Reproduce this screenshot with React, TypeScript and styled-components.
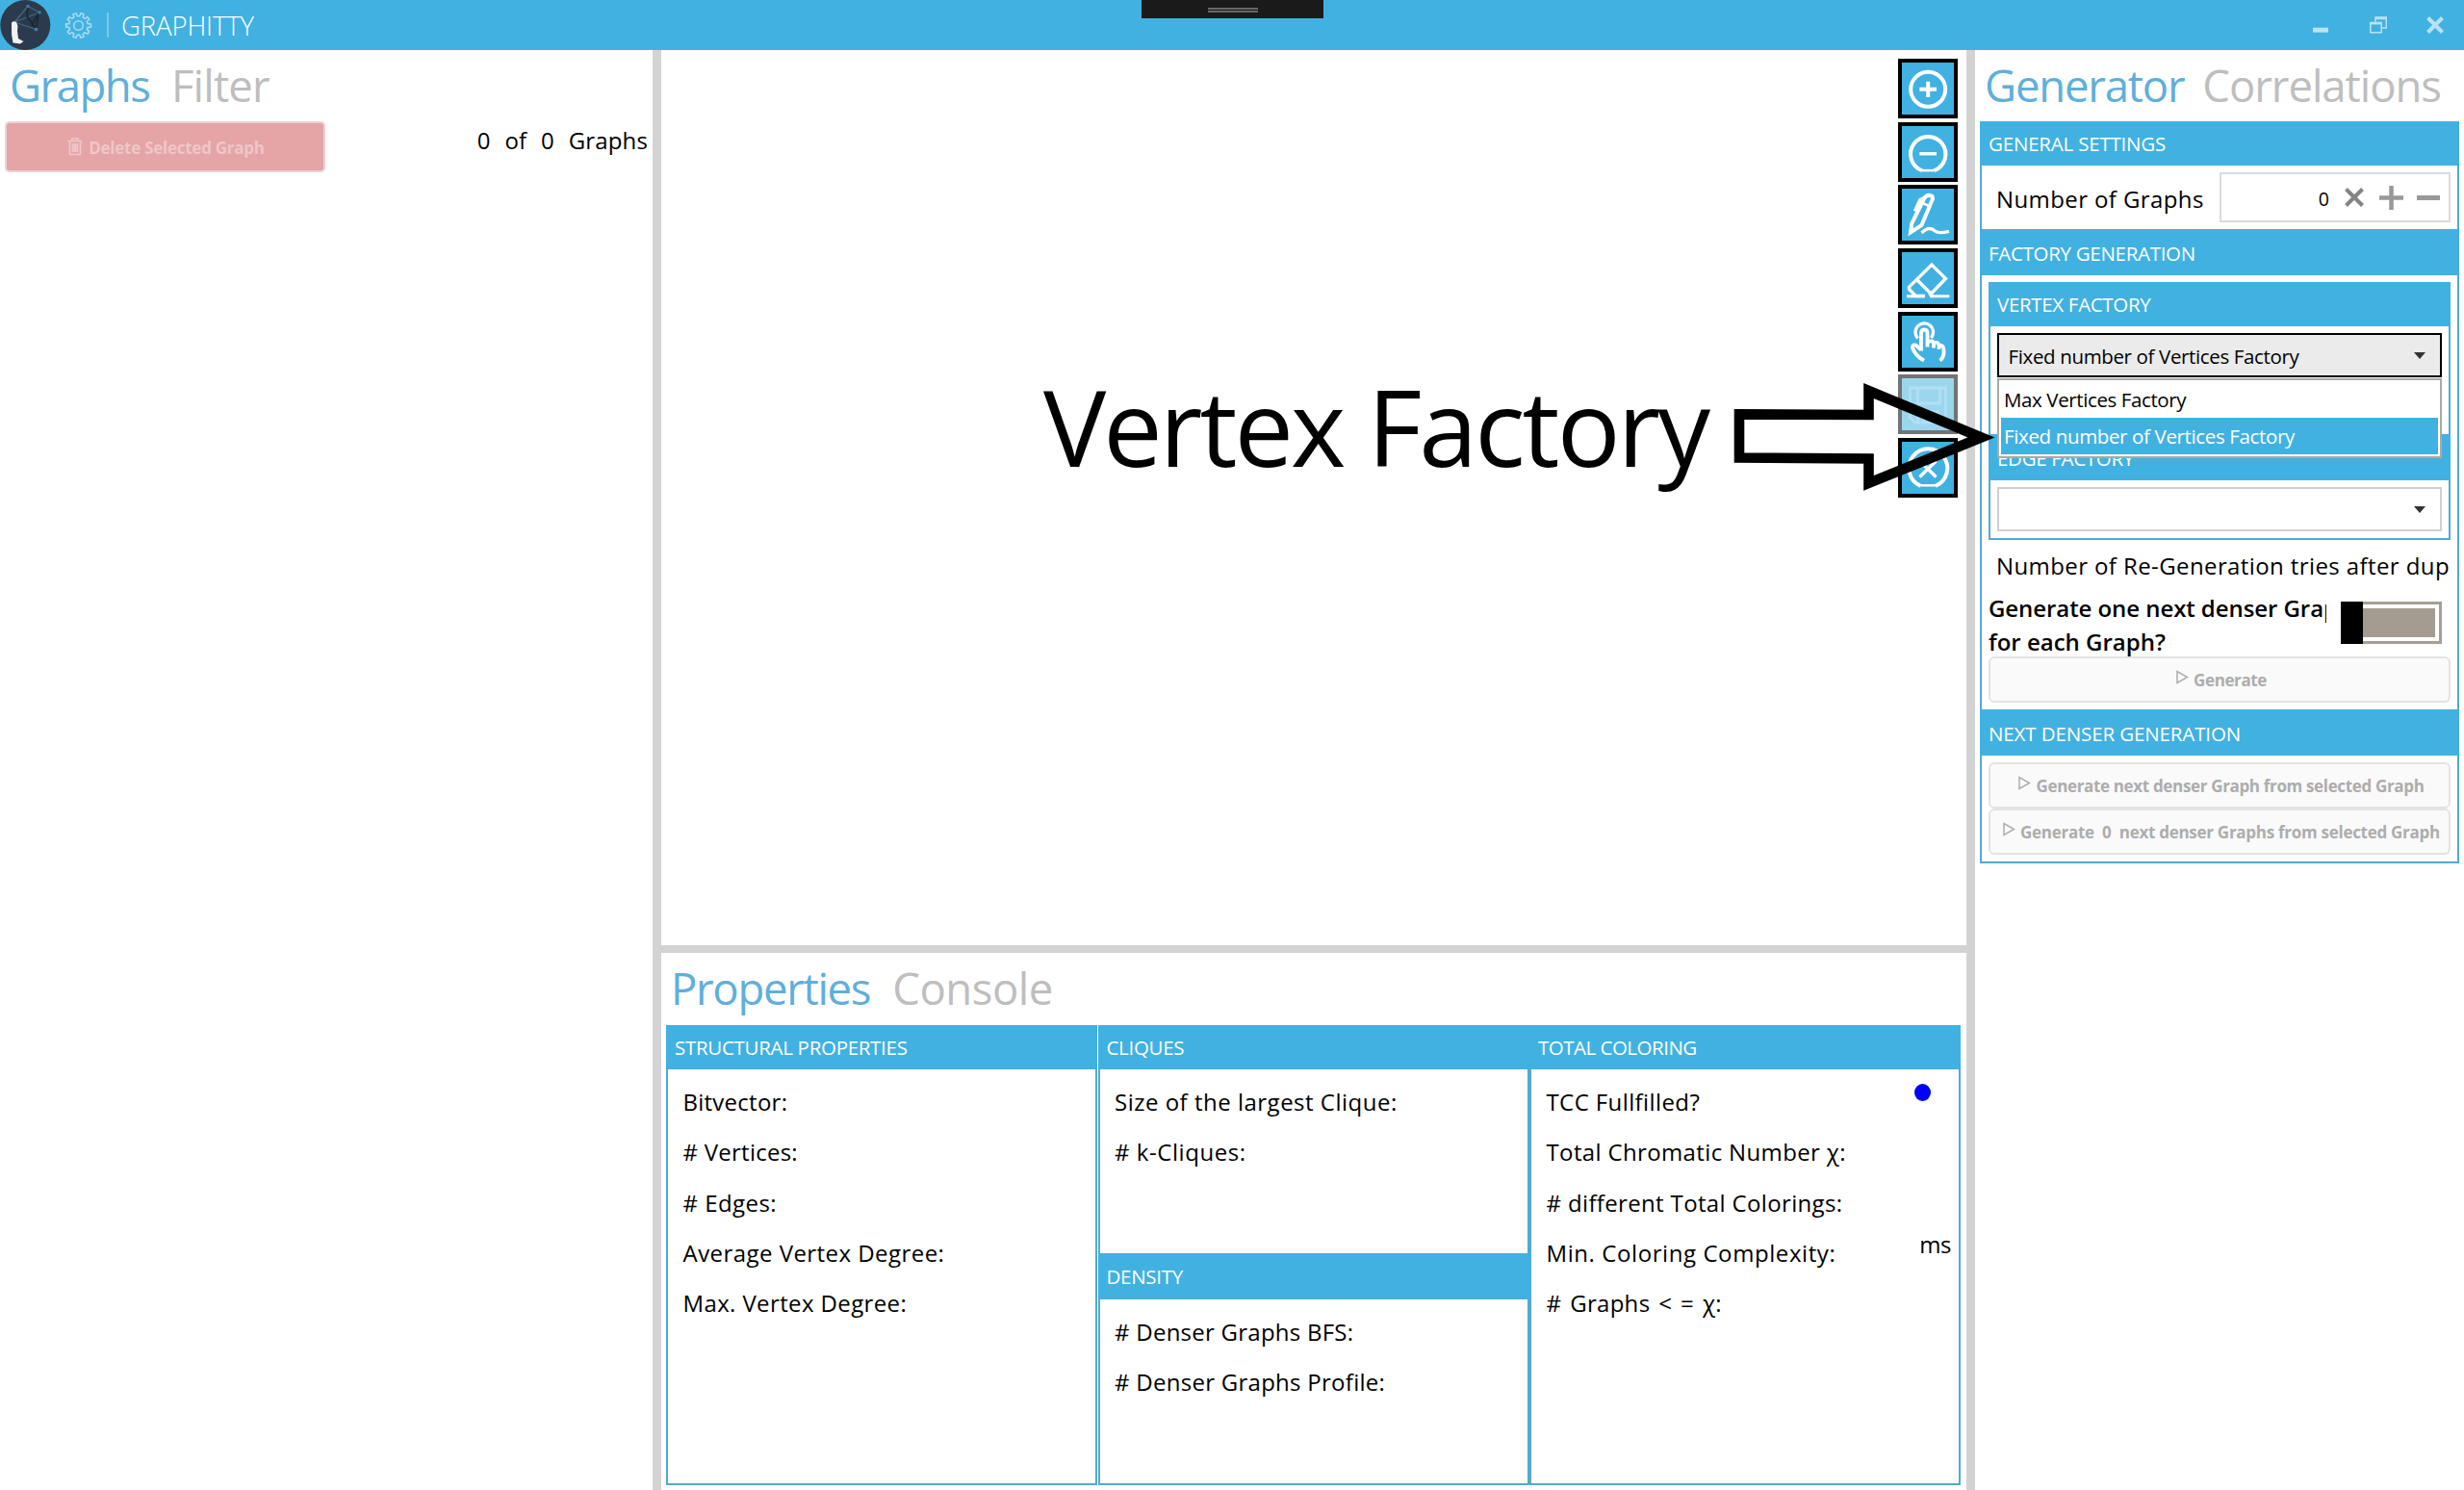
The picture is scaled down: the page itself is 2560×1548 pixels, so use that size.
import React from 'react';
import styled, { createGlobalStyle } from 'styled-components';

const BLUE = '#41b1e1';
const EDGE = '#51aad3';
const SPLIT = '#d3d3d3';

const GlobalStyle = createGlobalStyle`
  * { box-sizing: border-box; }
  body {
    margin: 0;
    background: #fff;
    color: #000;
    font-family: "Open Sans", "Noto Sans", sans-serif;
    overflow: hidden;
  }
  svg { display: block; flex: none; }
`;

const Window = styled.div`
  width: 2560px;
  height: 1548px;
  display: flex;
  flex-direction: column;
  background: #fff;
`;

/* Title bar */
const TitleBar = styled.header`
  position: relative;
  height: 52px;
  flex: none;
  display: flex;
  align-items: center;
  background: ${BLUE};
`;
const TitleSeparator = styled.div`
  width: 2px;
  height: 26px;
  margin-left: 15px;
  background: #7bc9ea;
`;
const GearBox = styled.div`
  margin-left: 14px;
`;
const AppTitle = styled.div`
  margin-left: 13px;
  padding-top: 1px;
  font-size: 27.5px;
  line-height: 52px;
  font-weight: 300;
  letter-spacing: -0.1px;
  color: #fff;
`;
const WindowButtons = styled.div`
  margin-left: auto;
  margin-right: 21px;
  display: flex;
  align-items: center;
`;
const CaptionButton = styled.div<{ $gap: number }>`
  margin-left: ${p => p.$gap}px;
`;
const DragHandle = styled.div`
  position: absolute;
  left: 1186px;
  top: 0;
  width: 189px;
  height: 19px;
  padding-top: 8px;
  display: flex;
  flex-direction: column;
  align-items: center;
  gap: 1px;
  background: #1a1a1a;
`;
const DragLine = styled.div`
  width: 52px;
  height: 2px;
  background: #686868;
`;

/* Columns */
const Workspace = styled.main`
  flex: 1;
  min-height: 0;
  display: grid;
  grid-template-columns: 678px 9px 1356px 9px 508px;
`;
const Column = styled.section`
  position: relative;
  min-width: 0;
  display: flex;
  flex-direction: column;
`;
const VerticalSplitter = styled.div`
  background: ${SPLIT};
`;
const HorizontalSplitter = styled.div`
  height: 8px;
  flex: none;
  background: ${SPLIT};
`;

const Tabs = styled.nav<{ $h?: number; $gap: number }>`
  height: ${p => p.$h ?? 74}px;
  flex: none;
  display: flex;
  gap: ${p => p.$gap}px;
  padding-left: 10px;
`;
const Tab = styled.div<{ $active?: boolean; $track: number }>`
  font-size: 45.5px;
  line-height: 72px;
  letter-spacing: ${p => p.$track}px;
  white-space: nowrap;
  color: ${p => (p.$active ? '#5fafdc' : '#bebebe')};
`;

const Text = styled.span<{ $track?: number; $drop?: number; $word?: number }>`
  letter-spacing: ${p => p.$track ?? 0}px;
  word-spacing: ${p => p.$word ?? 0}px;
  padding-top: ${p => p.$drop ?? 0}px;
  white-space: pre;
`;

/* Graph list */
const ListHeader = styled.div`
  display: flex;
  justify-content: space-between;
  padding: 0 5px 0 5px;
`;
const DeleteButton = styled.button`
  width: 333px;
  height: 53px;
  padding: 0 0 0 2px;
  display: flex;
  align-items: center;
  justify-content: center;
  gap: 6px;
  border: 2px solid #edd2d3;
  border-radius: 5px;
  background: #e5a4a6;
  color: #efc6c8;
  font: 700 17px "Open Sans", sans-serif;
`;
const Count = styled.div`
  font-size: 24px;
  line-height: 40px;
`;

/* Canvas */
const Canvas = styled.div`
  position: relative;
  height: 930px;
  flex: none;
  display: flex;
  justify-content: flex-end;
`;
const ToolColumn = styled.div`
  display: flex;
  flex-direction: column;
  gap: 3.7px;
  padding: 9px 9px 0 0;
`;
const ToolButton = styled.div<{ $disabled?: boolean }>`
  width: 62px;
  height: 62px;
  border: 4px solid ${p => (p.$disabled ? '#737373' : '#000')};
  background: ${p => (p.$disabled ? '#9bd6ef' : BLUE)};
  color: ${p => (p.$disabled ? '#b1dff3' : '#fff')};
`;
const CalloutLabel = styled.div`
  position: absolute;
  left: 397px;
  top: 316px;
  font-size: 109.5px;
  line-height: 150px;
  letter-spacing: -3px;
  white-space: nowrap;
`;
const CalloutArrow = styled.svg`
  position: absolute;
  left: 1103px;
  top: 338px;
  z-index: 5;
`;

/* Properties */
const PropertyGrid = styled.div`
  height: 478px;
  margin: 0 6px 0 5px;
  display: grid;
  grid-template-columns: 448px 448px 448px;
  column-gap: 0.5px;
`;
const Card = styled.div`
  display: flex;
  flex-direction: column;
  border: 2px solid ${EDGE};
  border-top: 0;
`;
const Heading = styled.div<{ $h: number; $track?: number; $drop?: number }>`
  height: ${p => p.$h}px;
  flex: none;
  margin: 0 -2px;
  padding: ${p => p.$drop ?? 0}px 0 0 9px;
  font-size: 20.5px;
  line-height: ${p => p.$h - (p.$drop ?? 0)}px;
  letter-spacing: ${p => p.$track ?? 0}px;
  color: #fff;
  background: ${BLUE};
  white-space: nowrap;
`;
const PropertyRows = styled.div<{ $h?: number }>`
  height: ${p => (p.$h ? p.$h + 'px' : 'auto')};
  padding: 8px 8px 0 15.5px;
`;
const PropertyRow = styled.div`
  height: 52.3px;
  display: flex;
  align-items: center;
  justify-content: space-between;
  font-size: 24px;
  line-height: 52.3px;
`;
const Dot = styled.div`
  width: 17px;
  height: 18px;
  margin: 0 21px 20px 0;
  border-radius: 50%;
  background: #00f;
`;
const Unit = styled.div`
  margin-bottom: 18px;
  letter-spacing: -0.4px;
`;

/* Generator */
const Group = styled.div`
  margin: 0 5px;
  border: 2px solid ${EDGE};
  border-top: 0;
`;
const SettingRow = styled.div`
  height: 66px;
  display: flex;
  align-items: center;
  justify-content: space-between;
  padding: 0 7px 0 15px;
  font-size: 24px;
`;
const Spinner = styled.div`
  width: 240px;
  height: 52px;
  display: flex;
  align-items: center;
  justify-content: flex-end;
  padding-right: 9px;
  border: 2px solid #dadada;
  font-size: 19.5px;
`;
const SpinnerIcon = styled.div<{ $gap: number }>`
  margin-left: ${p => p.$gap}px;
`;
const Body = styled.div`
  padding: 7px;
`;
const FactoryBox = styled.div`
  border: 2px solid ${EDGE};
  border-top: 0;
`;
const ComboSlot = styled.div<{ $h: number }>`
  height: ${p => p.$h}px;
  padding: 7px;
`;
const Combo = styled.div<{ $open?: boolean }>`
  position: relative;
  height: 46px;
  display: flex;
  align-items: center;
  justify-content: space-between;
  padding: 0 15px 0 9.5px;
  border: 2px solid ${p => (p.$open ? '#000' : '#cfcfcf')};
  background: ${p => (p.$open ? '#ebebeb' : '#fff')};
  font-size: 20.5px;
`;
const Popup = styled.div`
  position: absolute;
  z-index: 3;
  left: -2px;
  right: -2px;
  top: 44.5px;
  padding: 1px 2px 2px;
  border: 2px solid #aba9a4;
  background: #fff;
`;
const Option = styled.div<{ $selected?: boolean; $track: number }>`
  height: 38px;
  padding-left: 3px;
  line-height: 38px;
  letter-spacing: ${p => p.$track}px;
  color: ${p => (p.$selected ? '#fff' : '#000')};
  background: ${p => (p.$selected ? BLUE : 'transparent')};
`;
const RetryLabel = styled.div`
  height: 53px;
  padding-left: 8px;
  font-size: 24px;
  line-height: 54px;
  letter-spacing: 0.4px;
  white-space: nowrap;
`;
const ToggleRow = styled.div`
  height: 68px;
  display: flex;
  justify-content: space-between;
  align-items: flex-start;
  padding-right: 9px;
`;
const ToggleLabel = styled.div`
  width: 351px;
`;
const ToggleLine = styled.div<{ $track: number }>`
  font-size: 24px;
  font-weight: 600;
  line-height: 35px;
  letter-spacing: ${p => p.$track}px;
  white-space: nowrap;
  overflow: hidden;
`;
const Toggle = styled.div`
  width: 105px;
  height: 44px;
  margin-top: 11px;
  display: flex;
  background: #a59f95;
`;
const ToggleThumb = styled.div`
  width: 23px;
  background: #000;
`;
const ToggleTrack = styled.div`
  flex: 1;
  margin: 3px 3px 3px 0;
  border: 4px solid #fff;
  border-left: 0;
  background: #a59c91;
`;
const ActionButton = styled.button`
  width: 100%;
  height: 48px;
  padding: 0 0 0 4px;
  display: flex;
  align-items: center;
  justify-content: center;
  gap: 5px;
  border: 2px solid #e3e3e3;
  border-radius: 6px;
  background: #fafafa;
  color: #adadad;
  font: 700 17px "Open Sans", sans-serif;
`;

function gearPath(teeth: number, outer: number, inner: number) {
  const step = (Math.PI * 2) / teeth;
  const points: string[] = [];
  for (let i = 0; i < teeth; i++) {
    const a = i * step;
    [[-0.3, inner], [-0.2, outer], [0.2, outer], [0.3, inner]].forEach(([f, r]) => {
      points.push(`${(Math.cos(a + f * step) * r).toFixed(2)} ${(Math.sin(a + f * step) * r).toFixed(2)}`);
    });
  }
  return `M${points.join('L')}Z`;
}

const Logo = () => (
  <svg width="53" height="52" viewBox="0 0 53 52">
    <circle cx="26.3" cy="26" r="26" fill="#2b3a4c" />
    <g stroke="#47687f" strokeWidth="1.2" fill="none">
      <path d="M15 23L29 6.5M15 23L41 13M15 23L37.5 30.5M29 6.5L41 13" />
      <path d="M29 7L28 17L37.5 30.5L40 13L33 27" stroke="#1b2531" strokeWidth="1.6" />
    </g>
    <g fill="#3d7ba6">
      <circle cx="29" cy="6.5" r="1.8" />
      <circle cx="41" cy="13" r="1.8" />
      <circle cx="37.5" cy="30.5" r="2" />
    </g>
    <path d="M12 23.500Q14 21.500 17 23L18.500 27L18 32L19 40L24.500 43L21 45.500L13.500 44.500Q11.500 36 12 29Z" fill="#f1f1f1" />
  </svg>
);

const Gear = () => (
  <svg width="29" height="29" viewBox="-14.500 -14.500 29 29" fill="none" stroke="#a5dbf2" strokeWidth="1.6" strokeLinejoin="round">
    <path d={gearPath(10, 13, 9.8)} />
    <circle r="4.800" />
  </svg>
);

const Trash = () => (
  <svg width="16" height="20" viewBox="0 0 16 20" fill="none" stroke="#efc6c8" strokeWidth="1.7">
    <path d="M0.500 3.500H15.500M5 3.500V1H11V3.500M2.500 3.500V17.500H13.500V3.500" />
    <path d="M5.800 6V15M8 6V15M10.200 6V15" strokeWidth="2" />
  </svg>
);

const Play = () => (
  <svg width="13" height="24" viewBox="0 0 13 24" fill="none" stroke="#adadad" strokeWidth="1.5">
    <path d="M1 3.500V15.500L11.500 9.500Z" />
  </svg>
);

const DropArrow = () => (
  <svg width="12" height="9" viewBox="0 0 12 9">
    <path d="M0 1H12L6 8Z" fill="#333" />
  </svg>
);

const tools: { name: string; disabled?: boolean; art: React.ReactNode }[] = [
  { name: 'add', art: <><circle cx="31.200" cy="31.800" r="18" /><path d="M22.300 31.800H40M31.200 23.800V40" /></> },
  { name: 'remove', art: <><path d="M25 50.200A18.200 18.200 0 1 1 37.400 50.200" /><path d="M25 50.100H37.400" strokeWidth="2.500" /><path d="M22.300 32.700H40" strokeWidth="3.400" /></> },
  { name: 'pen', art: <><path d="M13 49.500L14.300 40L27.500 13.500Q31 9 35.500 12L36 14.500L24.500 42Z" /><path d="M27 14L23 15.500L17.500 27.500" strokeWidth="3.600" /><path d="M25.500 19L33.500 22.500" strokeWidth="2.500" /><path d="M24.500 50Q32 42 38.500 48Q42.500 51 53 48.300" strokeWidth="3.400" /></> },
  { name: 'eraser', art: <><path d="M32.500 49L49.500 31.500L35 17L11.500 40.200V42.500L18.500 49.500H28M19.500 32.500L34 47" strokeWidth="3.300" /><path d="M9 49.700H27M33 49.700H53.300" strokeWidth="3" /></> },
  { name: 'touch', art: <><path d="M20.500 27.500A9.300 9.300 0 1 1 34.500 27" strokeWidth="3.400" /><path d="M24 40.500V22.500Q24 18.500 27.300 18.500Q30.500 18.500 30.500 22.500V36.500M30.500 31.500Q36.500 28.500 37 33V37.500M37 32.500Q42.500 30.500 42.500 35.500V39M42.500 35Q47.500 34 47.500 39.500Q48 47.500 43.500 50.500M24 39.500L19 35Q15.500 33 14.800 37Q18 46 27 50.500" strokeWidth="3.800" /></> },
  { name: 'save', disabled: true, art: <><path d="M12.500 14H49.500V50H18L12.500 45ZM20.500 14V30H43.500V14M20.500 50V38.500H41.500V50M27 43V49" strokeWidth="2.800" /></> },
  { name: 'clear', art: <><path d="M23.500 49.800A20 20 0 1 1 39 49.800" /><path d="M23.500 49.300H39" strokeWidth="2.500" /><path d="M22.500 24L39.500 40.500M39.500 24L22.500 40.500" strokeWidth="3.400" /></> },
];

export default function App() {
  return (
    <Window>
      <GlobalStyle />
      <TitleBar>
        <Logo />
        <GearBox><Gear /></GearBox>
        <TitleSeparator />
        <AppTitle>GRAPHITTY</AppTitle>
        <DragHandle><DragLine /><DragLine /></DragHandle>
        <WindowButtons>
          <CaptionButton $gap={0}>
            <svg width="16" height="18" viewBox="0 0 16 18"><path d="M0 14.200H16" stroke="#b9e3f5" strokeWidth="5" /></svg>
          </CaptionButton>
          <CaptionButton $gap={43}>
            <svg width="18" height="18" viewBox="0 0 18 18" fill="none" stroke="#b9e3f5" strokeWidth="1.500">
              <path d="M6 5.500V1H17.300V12H12.500" /><path d="M6 2H17.300" strokeWidth="2.500" />
              <path d="M0.800 6.500H12.200V16.800H0.800Z" /><path d="M0.800 7.200H12.200" strokeWidth="2.500" />
            </svg>
          </CaptionButton>
          <CaptionButton $gap={41}>
            <svg width="18" height="18" viewBox="0 0 18 18"><path d="M1.500 1.500L16.500 16.500M16.500 1.500L1.500 16.500" stroke="#b9e3f5" strokeWidth="4" /></svg>
          </CaptionButton>
        </WindowButtons>
      </TitleBar>

      <Workspace>
        <Column>
          <Tabs $gap={22.5}>
            <Tab $active $track={-1.5}>Graphs</Tab>
            <Tab $track={-0.8}>Filter</Tab>
          </Tabs>
          <ListHeader>
            <DeleteButton>
              <Trash />
              <Text $track={-0.26} $drop={1}>Delete Selected Graph</Text>
            </DeleteButton>
            <Count><Text $track={0.15} $word={1}>0  of  0  Graphs</Text></Count>
          </ListHeader>
        </Column>

        <VerticalSplitter />

        <Column>
          <Canvas>
            <CalloutLabel>Vertex Factory</CalloutLabel>
            <ToolColumn>
              {tools.map(t => (
                <ToolButton key={t.name} $disabled={t.disabled}>
                  <svg width="54" height="54" viewBox="4 4 54 54" fill="none" stroke="currentColor" strokeWidth="4">{t.art}</svg>
                </ToolButton>
              ))}
            </ToolColumn>
            <CalloutArrow width="290" height="130" viewBox="1790 390 290 130" fill="none" stroke="#000" strokeWidth="10.600">
              <path d="M1807 430.400L1941.500 431V406L2058.500 454.500L1941.500 502V476.500L1807 475.500Z" strokeMiterlimit="10" />
            </CalloutArrow>
          </Canvas>
          <HorizontalSplitter />
          <Tabs $h={75} $gap={23}>
            <Tab $active $track={-1.3}>Properties</Tab>
            <Tab $track={-0.5}>Console</Tab>
          </Tabs>
          <PropertyGrid>
            <Card>
              <Heading $h={46} $track={-0.3}>STRUCTURAL PROPERTIES</Heading>
              <PropertyRows>
                <PropertyRow><Text $track={0.25}>Bitvector:</Text></PropertyRow>
                <PropertyRow><Text $track={0.25}># Vertices:</Text></PropertyRow>
                <PropertyRow><Text $track={0.45}># Edges:</Text></PropertyRow>
                <PropertyRow><Text $track={0.45}>Average Vertex Degree:</Text></PropertyRow>
                <PropertyRow><Text $track={0.38}>Max. Vertex Degree:</Text></PropertyRow>
              </PropertyRows>
            </Card>
            <Card>
              <Heading $h={46} $track={-0.3}>CLIQUES</Heading>
              <PropertyRows $h={191}>
                <PropertyRow><Text $track={0.5}>Size of the largest Clique:</Text></PropertyRow>
                <PropertyRow><Text $track={0.55}># k-Cliques:</Text></PropertyRow>
              </PropertyRows>
              <Heading $h={48} $track={-0.3}>DENSITY</Heading>
              <PropertyRows>
                <PropertyRow><Text $track={0.25}># Denser Graphs BFS:</Text></PropertyRow>
                <PropertyRow><Text $track={0.27}># Denser Graphs Profile:</Text></PropertyRow>
              </PropertyRows>
            </Card>
            <Card>
              <Heading $h={46} $track={-0.5}>TOTAL COLORING</Heading>
              <PropertyRows>
                <PropertyRow><Text $track={0.4}>TCC Fullfilled?</Text><Dot /></PropertyRow>
                <PropertyRow><Text $track={0.36}>Total Chromatic Number χ:</Text></PropertyRow>
                <PropertyRow><Text $track={0.35}># different Total Colorings:</Text></PropertyRow>
                <PropertyRow><Text $track={0.58}>Min. Coloring Complexity:</Text><Unit>ms</Unit></PropertyRow>
                <PropertyRow><Text $track={0.3} $word={2.3}>{'# Graphs < = χ:'}</Text></PropertyRow>
              </PropertyRows>
            </Card>
          </PropertyGrid>
        </Column>

        <VerticalSplitter />

        <Column>
          <Tabs $gap={19}>
            <Tab $active $track={-1.2}>Generator</Tab>
            <Tab $track={-1.05}>Correlations</Tab>
          </Tabs>
          <Group>
            <Heading $h={46} $track={-0.2} $drop={1}>GENERAL SETTINGS</Heading>
            <SettingRow>
              <Text $track={0.4} $drop={2}>Number of Graphs</Text>
              <Spinner>
                <Text $drop={2}>0</Text>
                <SpinnerIcon $gap={16}>
                  <svg width="20" height="20" viewBox="0 0 20 20"><path d="M1.500 1.500L18.500 18.500M18.500 1.500L1.500 18.500" stroke="#848484" strokeWidth="4" /></svg>
                </SpinnerIcon>
                <SpinnerIcon $gap={16}>
                  <svg width="25" height="25" viewBox="0 0 25 25"><path d="M12.500 0V25M0 12.500H25" stroke="#999" strokeWidth="4.500" /></svg>
                </SpinnerIcon>
                <SpinnerIcon $gap={14}>
                  <svg width="24" height="5" viewBox="0 0 24 5"><path d="M0 2.500H24" stroke="#999" strokeWidth="5" /></svg>
                </SpinnerIcon>
              </Spinner>
            </SettingRow>
            <Heading $h={48} $track={-0.3} $drop={3}>FACTORY GENERATION</Heading>
            <Body>
              <FactoryBox>
                <Heading $h={46} $track={-0.32} $drop={1}>VERTEX FACTORY</Heading>
                <ComboSlot $h={112}>
                  <Combo $open>
                    <Text $track={-0.36} $drop={1}>Fixed number of Vertices Factory</Text>
                    <DropArrow />
                    <Popup>
                      <Option $track={-0.39}>Max Vertices Factory</Option>
                      <Option $track={-0.36} $selected>Fixed number of Vertices Factory</Option>
                    </Popup>
                  </Combo>
                </ComboSlot>
                <Heading $h={48} $track={-0.32} $drop={3}>EDGE FACTORY</Heading>
                <ComboSlot $h={60}>
                  <Combo><span /><DropArrow /></Combo>
                </ComboSlot>
              </FactoryBox>
              <RetryLabel>Number of Re-Generation tries after dup</RetryLabel>
              <ToggleRow>
                <ToggleLabel>
                  <ToggleLine $track={-0.07}>Generate one next denser Graph</ToggleLine>
                  <ToggleLine $track={0}>for each Graph?</ToggleLine>
                </ToggleLabel>
                <Toggle><ToggleThumb /><ToggleTrack /></Toggle>
              </ToggleRow>
              <ActionButton><Play /><Text $track={-0.4}>Generate</Text></ActionButton>
            </Body>
            <Heading $h={48} $track={-0.12} $drop={3}>NEXT DENSER GENERATION</Heading>
            <Body>
              <ActionButton><Play /><Text $track={-0.34}>Generate next denser Graph from selected Graph</Text></ActionButton>
              <ActionButton><Play /><Text $track={-0.28}>Generate  0  next denser Graphs from selected Graph</Text></ActionButton>
            </Body>
          </Group>
        </Column>
      </Workspace>
    </Window>
  );
}
